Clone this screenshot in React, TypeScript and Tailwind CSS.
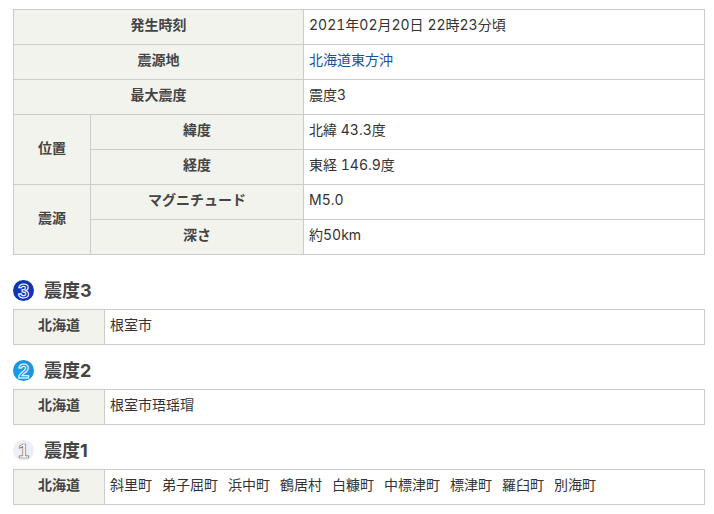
const font = { fontFamily: 'Inter, "Noto Sans CJK JP", "Noto Sans", sans-serif' };

const th = "border border-[#cccccc] bg-[#f3f3ee] p-0 pb-[4px] text-center align-middle text-[14px] font-bold text-[#444444]";
const td = "border border-[#cccccc] bg-white p-0 pb-[4px] pl-[5px] text-left align-middle text-[14px] font-normal text-[#333333] tabular-nums";

function Badge({ n, bg, fill, stroke, weight }: { n: number; bg: string; fill: string; stroke: string; weight: number }) {
  return (
    <svg width="21" height="21" viewBox="0 0 21 21" className="block shrink-0">
      <circle cx="10.5" cy="10.5" r="10.5" fill={bg} />
      <text x="10.5" y="17.6" textAnchor="middle" fontSize="20" fontWeight="700" fontFamily='"Liberation Sans", sans-serif' fill={fill} stroke={stroke} strokeWidth={weight}>
        {n}
      </text>
    </svg>
  );
}

function Section({ n, bg, fill, stroke, weight, children }: { n: number; bg: string; fill: string; stroke: string; weight: number; children: React.ReactNode }) {
  return (
    <section>
      <div className="flex h-[21px] items-center gap-[10px]">
        <Badge n={n} bg={bg} fill={fill} stroke={stroke} weight={weight} />
        <h2 className="text-[18px] font-bold leading-[21px] text-[#444444]">震度{n}</h2>
      </div>
      <table className="mt-[8px] w-[692px] table-fixed border-collapse">
        <tbody>
          <tr className="h-[35px]">
            <th className={`${th} w-[91px]`}>北海道</th>
            <td className={td}>{children}</td>
          </tr>
        </tbody>
      </table>
    </section>
  );
}

export default function App() {
  return (
    <div className="h-[514px] w-[714px] overflow-hidden bg-white pl-[13px] pt-[9px] leading-none" style={font}>
      <table className="w-[692px] table-fixed border-collapse">
        <colgroup>
          <col className="w-[77px]" />
          <col className="w-[213px]" />
          <col />
        </colgroup>
        <tbody>
          <tr className="h-[35px]">
            <th colSpan={2} className={th}>発生時刻</th>
            <td className={td}>2021年02月20日 22時23分頃</td>
          </tr>
          <tr className="h-[35px]">
            <th colSpan={2} className={th}>震源地</th>
            <td className={td}><a href="#" className="text-[#1a4f9c]">北海道東方沖</a></td>
          </tr>
          <tr className="h-[35px]">
            <th colSpan={2} className={th}>最大震度</th>
            <td className={td}>震度3</td>
          </tr>
          <tr className="h-[35px]">
            <th rowSpan={2} className={th}>位置</th>
            <th className={th}>緯度</th>
            <td className={td}>北緯 43.3度</td>
          </tr>
          <tr className="h-[35px]">
            <th className={th}>経度</th>
            <td className={td}>東経 146.9度</td>
          </tr>
          <tr className="h-[35px]">
            <th rowSpan={2} className={th}>震源</th>
            <th className={th}>マグニチュード</th>
            <td className={td}>M5.0</td>
          </tr>
          <tr className="h-[35px]">
            <th className={th}>深さ</th>
            <td className={td}>約50km</td>
          </tr>
        </tbody>
      </table>

      <div className="mt-[25px] flex flex-col gap-[15px]">
        <Section n={3} bg="#0b36b4" fill="#0b36b4" stroke="#ffffff" weight={1}>根室市</Section>
        <Section n={2} bg="#1798e2" fill="#1798e2" stroke="#ffffff" weight={1}>根室市珸瑶瑁</Section>
        <Section n={1} bg="#eeeef9" fill="#ffffff" stroke="#777777" weight={0.7}>
          <span className="flex gap-[10px]">
            <span>斜里町</span><span>弟子屈町</span><span>浜中町</span><span>鶴居村</span><span>白糠町</span><span>中標津町</span><span>標津町</span><span>羅臼町</span><span>別海町</span>
          </span>
        </Section>
      </div>
    </div>
  );
}
